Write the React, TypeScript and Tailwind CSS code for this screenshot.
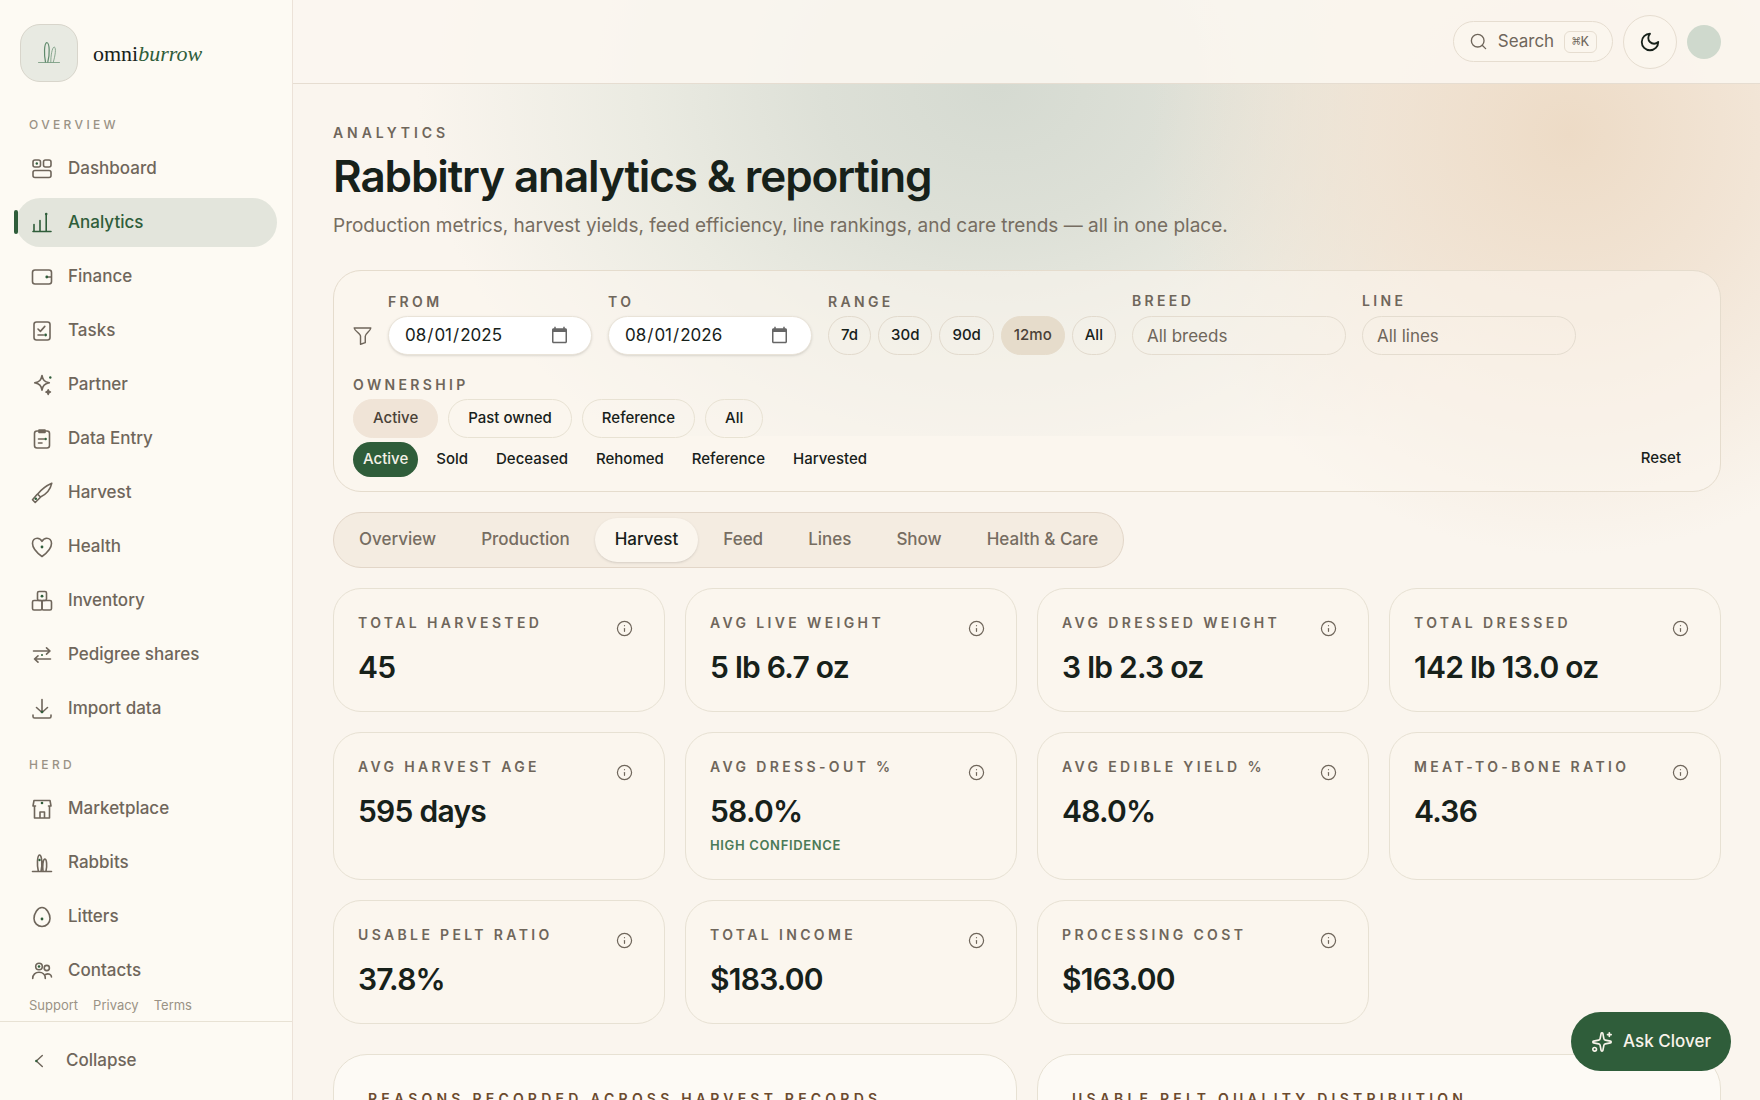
import { useState } from "react"
import { Info, Search, Sparkles } from "lucide-react"

type IconName =
  | "dashboard"
  | "analytics"
  | "finance"
  | "tasks"
  | "partner"
  | "entry"
  | "harvest"
  | "health"
  | "inventory"
  | "shares"
  | "import"
  | "market"
  | "rabbits"
  | "litters"
  | "contacts"

const GREEN = "#2f5d3a"

const icons: Record<IconName, React.ReactNode> = {
  dashboard: (
    <>
      <rect x="3" y="3" width="7.5" height="7" rx="2" />
      <rect x="13.5" y="3" width="7.5" height="7" rx="2" />
      <rect x="3" y="13.5" width="18" height="7" rx="2" />
      <circle cx="6.8" cy="6.5" r="1.2" fill={GREEN} stroke="none" />
    </>
  ),
  analytics: (
    <>
      <path d="M3 20.5h18M4 20v-6.5M10 20V9.5M16.2 20V4" />
      <circle cx="16.2" cy="3" r="1.3" fill={GREEN} stroke="none" />
    </>
  ),
  finance: (
    <>
      <rect x="2.5" y="5" width="19" height="14" rx="2.5" />
      <path d="M17 12h4" />
      <circle cx="16.8" cy="12" r="1.4" fill={GREEN} stroke="none" />
    </>
  ),
  tasks: (
    <>
      <rect x="4" y="3" width="16" height="18" rx="2.5" />
      <path d="M8 10l2.4 2.4 4.4-5M8 16h5.5" />
      <circle cx="15.6" cy="16" r="1.4" fill={GREEN} stroke="none" />
    </>
  ),
  partner: (
    <>
      <path d="M12 2.5c.9 4.7 2.3 6.2 7.3 7.3-5 1.1-6.4 2.6-7.3 7.3-.9-4.7-2.3-6.2-7.3-7.3 5-1.1 6.4-2.6 7.3-7.3z" />
      <path
        d="M18.2 16.8c.3 1.5.8 1.9 2.2 2.3-1.4.4-1.9.8-2.2 2.3-.3-1.5-.8-1.9-2.2-2.3 1.4-.4 1.9-.8 2.2-2.3z"
        fill="currentColor"
      />
      <circle cx="20.3" cy="4.5" r="1.2" fill={GREEN} stroke="none" />
    </>
  ),
  entry: (
    <>
      <rect x="4.5" y="4" width="15" height="17" rx="2.5" />
      <path d="M9 3h6v2.5H9z" fill="currentColor" />
      <path d="M8.5 12H14M8.5 16H12" />
      <circle cx="15.6" cy="12" r="1.3" fill={GREEN} stroke="none" />
    </>
  ),
  harvest: (
    <>
      <path d="M21.8 2.2C16.5 4.5 11.5 8.2 7.5 13.2l3 2.8c5-2.3 9.800-6.800 11.300-13.800z" />
      <path d="M7 13.5l-4.500 5.300 2.700 2.700 5-5" />
      <circle cx="5.8" cy="17.8" r="1.3" fill={GREEN} stroke="none" />
    </>
  ),
  health: (
    <>
      <path d="M12 21.5C6.5 17.500 2.500 13.500 2.500 8.500c0-3.300 2.200-5.300 4.700-5.300 2 0 3.800 1.100 4.800 3.100 1-2 2.800-3.100 4.800-3.100 2.500 0 4.700 2 4.700 5.300 0 5-4 9-9.500 13z" />
      <circle cx="12" cy="12" r="1.4" fill={GREEN} stroke="none" />
    </>
  ),
  inventory: (
    <>
      <rect x="7.5" y="2.5" width="9" height="9" rx="1.5" />
      <rect x="2.5" y="11.5" width="9.5" height="9.5" rx="1.5" />
      <rect x="12" y="11.5" width="9.5" height="9.5" rx="1.5" />
      <circle cx="12" cy="7.2" r="1.4" fill={GREEN} stroke="none" />
    </>
  ),
  shares: (
    <>
      <path d="M3.5 8H20M16.5 4.8L20 8l-3.5 3.2M20.5 16h-16M8 12.8L4.5 16 8 19.2" />
      <circle cx="12" cy="12" r="1" fill={GREEN} stroke="none" />
    </>
  ),
  import: (
    <>
      <path d="M12 2.5v13M6.5 10.5l5.5 5 5.5-5M3 18v1.5A1.5 1.5 0 0 0 4.5 21h15a1.5 1.5 0 0 0 1.5-1.5V18" />
      <circle cx="12" cy="15" r="1.3" fill={GREEN} stroke="none" />
    </>
  ),
  market: (
    <>
      <path d="M4.5 9v12h15V9M4 3.5h16L21 9h-2.5M4 3.5L3 9h2.5M10 21v-6h4.5v6" />
      <circle cx="12" cy="6" r="1.3" fill={GREEN} stroke="none" />
    </>
  ),
  rabbits: (
    <>
      <path d="M2.5 20.5h19M8.3 20c-1.4-5.5-1.2-15.5 1.2-16s3 10.5 1.6 16M13 20c-.6-4.5-.2-11.5 1.8-12s2.4 7.500 1.200 12" />
      <circle cx="9.5" cy="9" r="1.2" fill={GREEN} stroke="none" />
    </>
  ),
  litters: (
    <>
      <path d="M12 2.500c4.500 0 8 6.200 8 11 0 4.500-3.500 8-8 8s-8-3.500-8-8c0-4.800 3.500-11 8-11z" />
      <circle cx="12" cy="14" r="1.4" fill={GREEN} stroke="none" />
    </>
  ),
  contacts: (
    <>
      <circle cx="9" cy="7.5" r="3.3" />
      <circle cx="16.8" cy="9" r="2.6" />
      <path d="M2.7 19.5c0-4 2.8-6.3 6.3-6.3s6.3 2.3 6.3 6.3M15.5 15.500c3-1.500 6 0 6 2.500" />
      <circle cx="9" cy="7.5" r="1.3" fill={GREEN} stroke="none" />
    </>
  ),
}

function NavIcon({ name }: { name: IconName }) {
  return (
    <svg
      viewBox="0 0 24 24"
      className="size-6 shrink-0"
      fill="none"
      stroke="currentColor"
      strokeWidth="1.6"
      strokeLinecap="round"
      strokeLinejoin="round"
      aria-hidden="true"
    >
      {icons[name]}
    </svg>
  )
}

const overview: { label: string; icon: IconName }[] = [
  { label: "Dashboard", icon: "dashboard" },
  { label: "Analytics", icon: "analytics" },
  { label: "Finance", icon: "finance" },
  { label: "Tasks", icon: "tasks" },
  { label: "Partner", icon: "partner" },
  { label: "Data Entry", icon: "entry" },
  { label: "Harvest", icon: "harvest" },
  { label: "Health", icon: "health" },
  { label: "Inventory", icon: "inventory" },
  { label: "Pedigree shares", icon: "shares" },
  { label: "Import data", icon: "import" },
]

const herd: { label: string; icon: IconName }[] = [
  { label: "Marketplace", icon: "market" },
  { label: "Rabbits", icon: "rabbits" },
  { label: "Litters", icon: "litters" },
  { label: "Contacts", icon: "contacts" },
]

function NavGroup({ title, items }: { title: string; items: typeof overview }) {
  return (
    <div>
      <h2 className="px-[15px] text-xs leading-4 font-medium tracking-[0.28em] text-[#9a9285] uppercase">
        {title}
      </h2>
      <ul className="mt-[11px] flex flex-col gap-[5px]">
        {items.map((item) => {
          const active = item.label === "Analytics"
          return (
            <li key={item.label} className="relative">
              {active && (
                <span className="absolute top-3 left-0 h-6 w-1 rounded-full bg-[#2f5d3a]" />
              )}
              <a
                href="#"
                aria-current={active ? "page" : undefined}
                className={`ml-0.5 flex h-[49px] items-center gap-3.5 rounded-full px-3.5 text-[17px] font-medium ${
                  active ? "bg-[#e3e5dc] text-[#2f5d3a]" : "text-[#6f665b]"
                }`}
              >
                <NavIcon name={item.icon} />
                {item.label}
              </a>
            </li>
          )
        })}
      </ul>
    </div>
  )
}

function Sidebar() {
  return (
    <aside className="flex h-full w-[293px] shrink-0 flex-col border-r border-[#ece2d8] bg-[#fdfaf3]">
      <a href="#" className="flex items-center gap-[15px] px-5 pt-6">
        <span className="flex size-[58px] items-center justify-center rounded-[20px] border border-[#d8d5cb] bg-[#e8eae2] text-[#5f8a6c]">
          <svg
            viewBox="0 0 24 24"
            className="size-6"
            fill="none"
            stroke="currentColor"
            strokeLinecap="round"
          >
            <path d="M1.5 21.5h21" strokeOpacity="0.7" />
            <path d="M8.5 21C7 14 7 2.5 9.8 1.5c3 .5 3 12.5 1 19.5" strokeWidth="1.2" />
            <path d="M13.8 21c0-6 1.2-14.5 3.4-15 2.3.5 1 9-.9 15" strokeOpacity="0.7" />
          </svg>
        </span>
        <span className="font-['Liberation_Serif',serif] text-[22px] text-[#17211a]">
          omni<em className="text-[#2f5d3a]">burrow</em>
        </span>
      </a>
      <nav className="mt-[35px] flex min-h-0 flex-1 flex-col gap-6 overflow-hidden pr-[15px] pl-3.5">
        <NavGroup title="Overview" items={overview} />
        <NavGroup title="Herd" items={herd} />
      </nav>
      <div className="flex gap-[15px] px-[29px] pb-1.5 text-[13px] leading-5 text-[#9a9285]">
        <a href="#">Support</a>
        <a href="#">Privacy</a>
        <a href="#">Terms</a>
      </div>
      <div className="border-t border-[#e8e2d4] px-[29px] py-[22px]">
        <button
          type="button"
          className="flex h-[34px] items-center gap-[15px] text-[17px] font-medium text-[#6f665b]"
        >
          <svg
            viewBox="0 0 24 24"
            className="size-[22px]"
            fill="none"
            stroke="currentColor"
            strokeWidth="1.6"
            strokeLinecap="round"
            strokeLinejoin="round"
          >
            <path d="M14.5 6L8 12l6.5 6" />
            <circle cx="8" cy="12" r="1.3" fill={GREEN} stroke="none" />
          </svg>
          Collapse
        </button>
      </div>
    </aside>
  )
}

function Header() {
  return (
    <header className="relative flex h-[84px] shrink-0 items-center justify-end gap-2.5 border-b border-[#e6ddd1] bg-[#fbf6f0]/90 px-[39px]">
      <button
        type="button"
        className="flex h-[41px] items-center gap-2.5 rounded-full border border-[#e6ddd0] bg-[#fbf6ee] px-[15px] text-[17px] text-[#6f665b]"
      >
        <Search className="size-[19px]" strokeWidth={1.7} />
        Search
        <kbd className="rounded-md border border-[#e6ddd0] px-[7px] font-['Liberation_Mono',monospace] text-sm leading-5">
          ⌘K
        </kbd>
      </button>
      <button
        type="button"
        aria-label="Toggle theme"
        className="flex size-[54px] items-center justify-center rounded-full border border-[#e6ddd0] bg-[#fbf6ee] text-[#17211a]"
      >
        <svg
          viewBox="0 0 24 24"
          className="size-[22px]"
          fill="none"
          stroke="currentColor"
          strokeWidth="2"
          strokeLinecap="round"
          strokeLinejoin="round"
        >
          <path d="M12 3a6 6 0 0 0 9 9 9 9 0 1 1-9-9Z" />
        </svg>
      </button>
      <button type="button" aria-label="Account" className="size-[34px] rounded-full bg-[#cfd9cd]" />
    </header>
  )
}

const fieldLabel =
  "block text-sm leading-5 font-semibold tracking-[0.24em] text-[#6f665b] uppercase"

function DateField({ id, label, value }: { id: string; label: string; value: string }) {
  return (
    <div className="flex flex-col gap-1">
      <label htmlFor={id} className={fieldLabel}>
        {label}
      </label>
      <input
        id={id}
        type="date"
        defaultValue={value}
        className="h-[39px] w-[204px] rounded-full border border-[#e9e3d8] bg-white pr-[22px] pl-[15px] text-[17px] text-[#17211a] shadow-sm [&::-webkit-calendar-picker-indicator]:size-[19px] [&::-webkit-calendar-picker-indicator]:p-0 [&::-webkit-calendar-picker-indicator]:opacity-60"
      />
    </div>
  )
}

function TextField({
  id,
  label,
  placeholder,
}: {
  id: string
  label: string
  placeholder: string
}) {
  return (
    <div className="flex flex-col gap-[5px]">
      <label htmlFor={id} className={fieldLabel}>
        {label}
      </label>
      <input
        id={id}
        placeholder={placeholder}
        className="h-[39px] w-[214px] rounded-full border border-[#e4dccf] px-3.5 text-[17px] placeholder:text-[#6f665b]"
      />
    </div>
  )
}

const ranges = ["7d", "30d", "90d", "12mo", "All"]
const ownership = ["Active", "Past owned", "Reference", "All"]
const statuses = ["Active", "Sold", "Deceased", "Rehomed", "Reference", "Harvested"]

function Filters() {
  const [range, setRange] = useState("12mo")
  const [owner, setOwner] = useState("Active")
  const [status, setStatus] = useState("Active")

  return (
    <section className="rounded-[28px] border border-[#e5dccd] bg-[#fbf6ee]/55 px-[19px] pt-5 pb-3.5">
      <div className="flex flex-wrap items-end gap-4">
        <svg
          viewBox="0 0 24 24"
          className="mb-2.5 size-[19px] text-[#6f665b]"
          fill="none"
          stroke="currentColor"
          strokeWidth="1.8"
          strokeLinejoin="round"
        >
          <path d="M1.5 2.5h21c-.5 4-7 7-7 10.5v8l-6 2V13c0-3.5-7.5-6.5-8-10.500z" />
        </svg>
        <DateField id="from" label="From" value="2025-08-01" />
        <DateField id="to" label="To" value="2026-08-01" />
        <div className="flex flex-col gap-1">
          <span className={fieldLabel}>Range</span>
          <div className="flex gap-[7px]">
            {ranges.map((r) => (
              <button
                key={r}
                type="button"
                onClick={() => setRange(r)}
                className={`h-[39px] rounded-full border px-3 text-[15px] font-medium ${
                  r === range
                    ? "border-[#e6dccb] bg-[#e6dccb] text-[#4a4238]"
                    : "border-[#e2dacd] text-[#17211a]"
                }`}
              >
                {r}
              </button>
            ))}
          </div>
        </div>
        <TextField id="breed" label="Breed" placeholder="All breeds" />
        <TextField id="line" label="Line" placeholder="All lines" />
      </div>
      <div className="mt-5 flex items-end justify-between">
        <div>
          <span className={fieldLabel}>Ownership</span>
          <div className="mt-1 flex gap-2.5">
            {ownership.map((o) => (
              <button
                key={o}
                type="button"
                onClick={() => setOwner(o)}
                className={`h-[39px] rounded-full border px-[19px] text-[15px] font-medium ${
                  o === owner
                    ? "border-[#f0e4d7] bg-[#f0e4d7] text-[#4a4238]"
                    : "border-[#e8e2d3] text-[#17211a]"
                }`}
              >
                {o}
              </button>
            ))}
          </div>
          <div className="mt-1 flex gap-2">
            {statuses.map((s) => (
              <button
                key={s}
                type="button"
                onClick={() => setStatus(s)}
                className={`h-[35px] rounded-full px-2.5 text-[15px] font-medium ${
                  s === status ? "bg-[#2f5d3a] text-[#f5f1e8]" : "text-[#17211a]"
                }`}
              >
                {s}
              </button>
            ))}
          </div>
        </div>
        <button
          type="button"
          className="h-[38px] px-5 text-[15px] font-medium text-[#17211a]"
        >
          Reset
        </button>
      </div>
    </section>
  )
}

const tabs = ["Overview", "Production", "Harvest", "Feed", "Lines", "Show", "Health & Care"]

function TabBar() {
  const [tab, setTab] = useState("Harvest")

  return (
    <div
      role="tablist"
      className="flex w-fit gap-[5px] rounded-full border border-[#e2d6c8] bg-[#f4ece1] p-[5px]"
    >
      {tabs.map((t) => (
        <button
          key={t}
          type="button"
          role="tab"
          aria-selected={t === tab}
          onClick={() => setTab(t)}
          className={`h-11 rounded-full px-5 text-[17px] font-medium ${
            t === tab ? "bg-[#fbf6ee] text-[#17211a] shadow-sm" : "text-[#766d61]"
          }`}
        >
          {t}
        </button>
      ))}
    </div>
  )
}

const stats: { label: string; value: string; note?: string }[] = [
  { label: "Total harvested", value: "45" },
  { label: "Avg live weight", value: "5 lb 6.7 oz" },
  { label: "Avg dressed weight", value: "3 lb 2.3 oz" },
  { label: "Total dressed", value: "142 lb 13.0 oz" },
  { label: "Avg harvest age", value: "595 days" },
  { label: "Avg dress-out %", value: "58.0%", note: "High confidence" },
  { label: "Avg edible yield %", value: "48.0%" },
  { label: "Meat-to-bone ratio", value: "4.36" },
  { label: "Usable pelt ratio", value: "37.8%" },
  { label: "Total income", value: "$183.00" },
  { label: "Processing cost", value: "$163.00" },
]

function StatCard({ label, value, note }: (typeof stats)[number]) {
  return (
    <article className="rounded-[28px] border border-[#e7e1d3] bg-[#fbf6ee] px-6 pt-6 pb-[26px]">
      <div className="flex items-start justify-between">
        <h3 className={fieldLabel}>{label}</h3>
        <button
          type="button"
          aria-label={`About ${label}`}
          className="mt-[7px] mr-[7px] text-[#6f665b]"
        >
          <Info className="size-[17px]" strokeWidth={1.7} />
        </button>
      </div>
      <p className="mt-3 text-[30px] leading-9 font-semibold tracking-tight text-[#17211a]">
        {value}
      </p>
      {note && (
        <p className="mt-2 text-[13px] leading-4 font-semibold tracking-wider text-[#4a7a58] uppercase">
          {note}
        </p>
      )}
    </article>
  )
}

export default function App() {
  return (
    <div className="flex h-screen overflow-hidden bg-[#faf5ee] font-[Inter,sans-serif]">
      <Sidebar />
      <div className="relative flex min-w-0 flex-1 flex-col overflow-hidden">
        <div className="absolute inset-x-0 top-0 h-[436px] bg-[radial-gradient(ellipse_580px_460px_at_48%_20%,#d5dad1_0%,#dde0d7_30%,#ebebe2_62%,#faf5ee00_100%)]" />
        <div className="absolute inset-x-0 top-0 h-[560px] bg-[radial-gradient(circle_420px_at_87%_24%,#eddbc6_0%,#f0e1d0cc_45%,#faf0e500_100%)]" />
        <Header />
        <main className="relative min-h-0 flex-1 overflow-hidden pt-[39px] pr-[39px] pl-10">
          <p className="text-sm leading-5 font-semibold tracking-[0.28em] text-[#6f665b] uppercase">
            Analytics
          </p>
          <h1 className="mt-[7px] text-[44px] leading-[52px] font-semibold tracking-tight text-[#17211a]">
            Rabbitry analytics &amp; reporting
          </h1>
          <p className="mt-2 text-[19px] leading-8 text-[#766d61]">
            Production metrics, harvest yields, feed efficiency, line rankings, and care trends —
            all in one place.
          </p>
          <div className="mt-7 flex flex-col gap-5">
            <Filters />
            <TabBar />
            <div className="grid grid-cols-4 gap-5">
              {stats.map((stat) => (
                <StatCard key={stat.label} {...stat} />
              ))}
            </div>
          </div>
          <div className="mt-[30px] grid grid-cols-2 gap-5">
            {["Reasons recorded across harvest records", "Usable pelt quality distribution"].map(
              (title) => (
                <section
                  key={title}
                  className="h-80 rounded-[34px] border border-[#e7e1d3] bg-[#fdfaf5] px-[34px] py-[34px]"
                >
                  <h2 className="text-sm leading-5 font-semibold tracking-[0.3em] text-[#6b4a2e] uppercase">
                    {title}
                  </h2>
                </section>
              )
            )}
          </div>
        </main>
      </div>
      <button
        type="button"
        className="fixed right-[29px] bottom-[29px] flex h-[59px] items-center gap-2.5 rounded-full bg-[#2f5d3a] px-5 text-[17px] font-medium text-[#f8f3ea]"
      >
        <Sparkles className="size-[22px]" strokeWidth={1.8} />
        Ask Clover
      </button>
    </div>
  )
}
